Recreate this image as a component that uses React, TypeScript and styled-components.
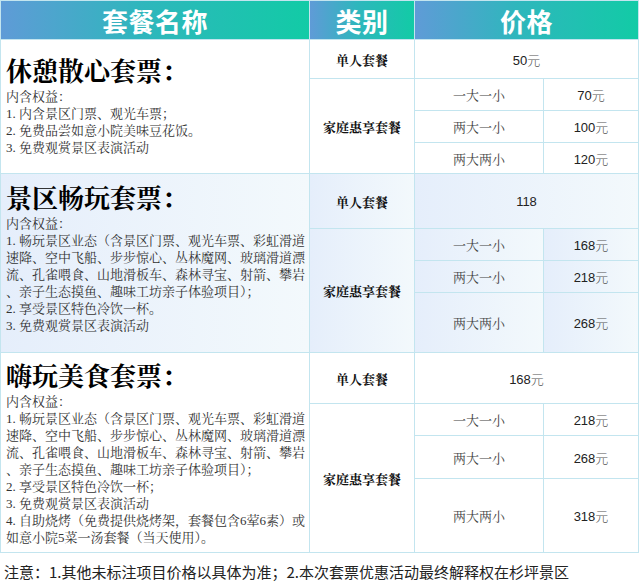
import React from "react";
import styled, { createGlobalStyle } from "styled-components";

const SERIF = `"Liberation Serif", "Noto Serif CJK SC", "Noto Sans CJK SC", serif`;
const SANS = `"Liberation Sans", "Noto Sans CJK SC", sans-serif`;
const CJK_SANS = `"Noto Sans CJK SC", sans-serif`;

const Global = createGlobalStyle`
  html, body { margin: 0; padding: 0; background: #fff; }
  body { width: 640px; height: 582px; overflow: hidden; }
  * { box-sizing: border-box; }
`;

const Page = styled.div`
  width: 640px;
  height: 582px;
  background: #fff;
`;

const Table = styled.div`
  display: grid;
  width: 639px;
  padding: 1px;
  gap: 1px;
  background: #c3e5ef;
  grid-template-columns: 308px 104px 128px 94px;
  grid-template-rows: 38px 38px 31px 31px 30px 54px 31px 31px 59px 50px 31px 42px 73px;
`;

const HeadCell = styled.div<{ $span?: number }>`
  grid-column: span ${(p) => p.$span ?? 1};
  display: flex;
  align-items: center;
  justify-content: center;
  background: linear-gradient(90deg, #5f9bd7 0%, #2fb6bd 45%, #12cba6 100%);
  color: #fff;
  font-family: ${CJK_SANS};
  font-weight: 700;
  font-size: 26px;
  letter-spacing: 0.5px;
`;

const Cell = styled.div<{ $tint?: boolean; $rows?: number; $cols?: number }>`
  grid-row: span ${(p) => p.$rows ?? 1};
  grid-column: span ${(p) => p.$cols ?? 1};
  display: flex;
  align-items: center;
  justify-content: center;
  background: ${(p) =>
    p.$tint ? "linear-gradient(90deg, #e5eefb 0%, #f3f9fc 100%)" : "#ffffff"};
`;

const NameCell = styled(Cell)<{ $pt?: number; $pb?: number }>`
  flex-direction: column;
  align-items: flex-start;
  justify-content: center;
  padding: ${(p) => p.$pt ?? 0}px 0 ${(p) => p.$pb ?? 0}px 5px;
`;

const Title = styled.div`
  font-family: ${SERIF};
  font-weight: 700;
  font-size: 26px;
  line-height: 30px;
  color: #000;
  white-space: nowrap;
`;

const Line = styled.div`
  font-family: ${SERIF};
  font-size: 13px;
  line-height: 17px;
  color: #333;
  white-space: nowrap;
`;

const Category = styled.span`
  font-family: ${SERIF};
  font-weight: 700;
  font-size: 13px;
  color: #111;
`;

const Sub = styled.span`
  font-family: ${SERIF};
  font-size: 13px;
  color: #444;
`;

const Price = styled.span`
  font-family: ${SANS};
  font-size: 13px;
  color: #222;
`;

const Yuan = styled.span`
  font-family: ${CJK_SANS};
  font-weight: 300;
  color: #555;
`;

const Note = styled.div`
  margin-top: 10px;
  padding-left: 4px;
  font-family: ${CJK_SANS};
  font-size: 15px;
  line-height: 18px;
  color: #222;
  white-space: nowrap;
`;

type Pkg = {
  title: string;
  lines: string[];
  single: string;
  family: string[];
  tint?: boolean;
  pt?: number;
  pb?: number;
};

const packages: Pkg[] = [
  {
    title: "休憩散心套票：",
    lines: [
      "内含权益：",
      "1. 内含景区门票、观光车票；",
      "2. 免费品尝如意小院美味豆花饭。",
      "3. 免费观赏景区表演活动",
    ],
    single: "50元",
    family: ["70元", "100元", "120元"],
  },
  {
    title: "景区畅玩套票：",
    lines: [
      "内含权益：",
      "1. 畅玩景区业态（含景区门票、观光车票、彩虹滑道",
      "速降、空中飞船、步步惊心、丛林魔网、玻璃滑道漂",
      "流、孔雀喂食、山地滑板车、森林寻宝、射箭、攀岩",
      "、亲子生态摸鱼、趣味工坊亲子体验项目）；",
      "2. 享受景区特色冷饮一杯。",
      "3. 免费观赏景区表演活动",
    ],
    single: "118",
    family: ["168元", "218元", "268元"],
    tint: true,
    pb: 8,
  },
  {
    title: "嗨玩美食套票：",
    lines: [
      "内含权益：",
      "1. 畅玩景区业态（含景区门票、观光车票、彩虹滑道",
      "速降、空中飞船、步步惊心、丛林魔网、玻璃滑道漂",
      "流、孔雀喂食、山地滑板车、森林寻宝、射箭、攀岩",
      "、亲子生态摸鱼、趣味工坊亲子体验项目）；",
      "2. 享受景区特色冷饮一杯；",
      "3. 免费观赏景区表演活动",
      "4. 自助烧烤（免费提供烧烤架，套餐包含6荤6素）或",
      "如意小院5菜一汤套餐（当天使用）。",
    ],
    single: "168元",
    family: ["218元", "268元", "318元"],
    pt: 3,
  },
];

const subs = ["一大一小", "两大一小", "两大两小"];

function PriceText({ value }: { value: string }) {
  const hasYuan = value.endsWith("元");
  const num = hasYuan ? value.slice(0, -1) : value;
  return (
    <Price>
      {num}
      {hasYuan && <Yuan>元</Yuan>}
    </Price>
  );
}

export default function App() {
  return (
    <Page>
      <Global />
      <Table>
        <HeadCell>套餐名称</HeadCell>
        <HeadCell>类别</HeadCell>
        <HeadCell $span={2}>价格</HeadCell>
        {packages.map((p) => (
          <React.Fragment key={p.title}>
            <NameCell $tint={p.tint} $rows={4} $pt={p.pt} $pb={p.pb}>
              <Title>{p.title}</Title>
              {p.lines.map((l, i) => (
                <Line key={i}>{l}</Line>
              ))}
            </NameCell>
            <Cell $tint={p.tint}>
              <Category>单人套餐</Category>
            </Cell>
            <Cell $tint={p.tint} $cols={2}>
              <PriceText value={p.single} />
            </Cell>
            <Cell $tint={p.tint} $rows={3}>
              <Category>家庭惠享套餐</Category>
            </Cell>
            {p.family.map((f, i) => (
              <React.Fragment key={i}>
                <Cell $tint={p.tint}>
                  <Sub>{subs[i]}</Sub>
                </Cell>
                <Cell $tint={p.tint}>
                  <PriceText value={f} />
                </Cell>
              </React.Fragment>
            ))}
          </React.Fragment>
        ))}
      </Table>
      <Note>注意：1.其他未标注项目价格以具体为准；2.本次套票优惠活动最终解释权在杉坪景区</Note>
    </Page>
  );
}
